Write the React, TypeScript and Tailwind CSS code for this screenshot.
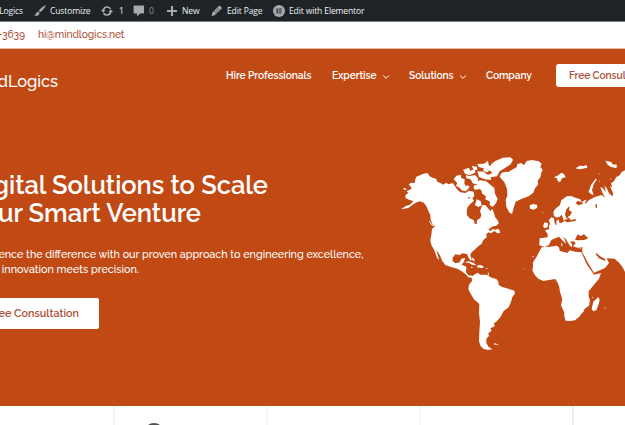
import React from "react";

const ui = "font-['Open_Sans','Noto_Sans',sans-serif]";
const brand = "font-['Raleway','Lato',sans-serif]";

function Brush() {
  return (
    <svg className="h-3 w-3 shrink-0" viewBox="0 0 12 12" fill="#a7aaad">
      <path d="M11.800.3C10 .7 6.300 3.600 4.700 5.800l1.400 1.500C8.500 5.600 11.400 2.500 11.800.3zM4.100 6.500C2.300 6.600 2.500 9 .3 10.200c1.900 1.300 5 .5 5.200-2.300z" />
    </svg>
  );
}

function Update() {
  return (
    <svg className="h-3 w-3 shrink-0" viewBox="0 0 12 12" fill="none" stroke="#a7aaad" strokeWidth="1.7">
      <path d="M2.200 5.200C2.700 3.200 4.200 2 6 2c1.500 0 2.700.7 3.400 1.800M9.800 6.800C9.300 8.800 7.800 10 6 10c-1.500 0-2.700-.7-3.400-1.800" />
      <path d="M0 5h4.400L2.200 7.800zM12 7H7.600l2.200-2.800z" fill="#a7aaad" stroke="none" />
    </svg>
  );
}

function Comment() {
  return (
    <svg className="h-3 w-3 shrink-0" viewBox="0 0 12 12" fill="#a7aaad">
      <path d="M1.400.6h8.700Q11 .6 11 1.500v6.100Q11 8.500 10.100 8.500H7L4 11.600V8.500H1.400Q.6 8.500.6 7.600V1.500Q.6.6 1.400.6z" />
    </svg>
  );
}

function Plus() {
  return (
    <svg className="h-3 w-3 shrink-0" viewBox="0 0 12 12" fill="#a7aaad">
      <path d="M5 1h2v4h4v2H7v4H5V7H1V5h4z" />
    </svg>
  );
}

function Pencil() {
  return (
    <svg className="h-3 w-3 shrink-0" viewBox="0 0 12 12" fill="#a7aaad">
      <path d="M7.500 1.300Q8.500.4 9.500 1.300l.8.8q.8.900 0 1.800L4 10.100.5 11.200l1-3.700z" />
      <path d="M3 7.500l4.700-4.700M4.100 8.700L8.800 4" stroke="#1d2327" strokeWidth=".5" />
    </svg>
  );
}

function Elementor() {
  return (
    <svg className="h-3 w-3 shrink-0" viewBox="0 0 12 12">
      <circle cx="6" cy="6" r="6" fill="#a7aaad" />
      <path d="M3.500 3.500h1.200v5H3.500zM5.600 3.500h3v1h-3zM5.600 5.500h3v1h-3zM5.600 7.500h3v1h-3z" fill="#1d2327" />
    </svg>
  );
}

function Chevron() {
  return (
    <svg className="mt-0.5 h-1.5 w-2 shrink-0" viewBox="0 0 8 6" fill="none" stroke="#fff" strokeWidth="1">
      <path d="M1.200 1.500L4 4.300l2.800-2.800" />
    </svg>
  );
}

function WorldMap() {
  return (
    <svg className="block h-[205px] w-[225px]" viewBox="15 0 675 615" fill="#fff">
      {/* North and Central America */}
      <path d="M18 178L34 167 45 164 55 153 44 150 32 145 31 136 40 129 35 124 50 116 46 108 41 104 47 98 60 99 60 91 64 80 82 73 91 70 98 70 104 79 112 83 123 86 127 95 136 99 145 104 153 98 161 103 173 99 180 109 188 120 196 127 211 129 222 122 236 125 238 138 232 145 237 152 225 163 218 171 215 182 216 196 224 205 236 210 240 223 245 222 246 211 256 204 259 194 255 184 261 166 271 165 278 173 286 183 292 177 297 189 300 201 307 210 312 219 304 227 291 230 280 239 286 243 294 237 300 239 311 236 316 248 307 250 298 243 288 250 280 247 274 253 275 262 265 270 260 281 250 289 241 297 230 307 226 315 230 328 228 333 221 324 216 312 202 310 194 315 181 313 173 323 173 333 181 340 194 337 199 326 211 324 205 338 200 344 214 350 213 367 220 376 232 377 240 382 233 384 220 382 212 373 200 364 187 356 170 352 151 345 142 333 134 314 124 300 131 325 133 331 126 323 118 301 109 285 106 270 109 254 111 237 120 229 112 221 107 209 106 195 99 181 94 168 86 158 76 154 65 157 52 165 40 174z" />
      <path d="M176 88l8-11 13-3 2 10 10 4-1 13 10 14-5 9-13-3-8-9-9-4 4-9zM204 59l18-6 4 9 14-4 1 10-16 7-14-3zM213 76l12 2 15-3 9 10-1 12-16 1-5-10-13-3zM230 48l16 2 1 9-10 2zM247 64l19 1 10 8 11 4 1 13-18-2-18-7zM253 91l20 2 11 10 14 11 2 17 8 16-5 13-10 11-9-6 1-10-14-7 1-9-11-9-2-10-10-4-4-13-12-3 1-7 14 1zM247 42l20-1 12-9 2 13 9 8-12 14-13-3 1-9-15-4zM281 58l8-16 12-9 23-10 22-1 8 7-7 14-16 10-17 11-8 15-20 3-6-8 12-5zM240 104l9 4 1 10-10 2-5-8zM245 148l12 5 3 13-10 5-11-6zM217 106l7 4-6 9-8-7zM25 113l7 2 3 5-8-1zM102 211l8 10 9 8-7-2-8-9z" />
      {/* Antilles */}
      <path d="M208 337l13-3 15 5 9 7-14-2-8-5zM248 346l9-1 11 6-8 3-14-2zM227 350l8 2-6 2zM274 353l5 4-5 1zM279 363l3 13-4 1zM230 322l8 6 1 7-7-5zM240 331l7 9" />
      {/* South America */}
      <path transform="translate(90 300)" d="M140 80L150 73 158 68 166 74 184 74 200 83 214 87 220 95 221 105 232 111 250 116 268 122 270 130 262 142 257 158 251 172 236 183 227 200 214 215 207 219 209 229 196 235 200 242 190 250 192 258 184 266 184 279 191 291 202 297 190 300 176 297 167 289 162 274 163 245 165 215 162 190 163 162 147 148 136 130 130 117 132 104 141 93z" />
      <path d="M296 581l5-1 3 2-4 3zM304 582l4-1 2 3-5 1z" />
      {/* Greenland and Iceland */}
      <path d="M314 80l5-11 11-4 10 1 11-7 14-7 2-10 12-3 8 7 8-13 16-3 20 4 9 7-4 11 7 7-4 9-3 14-8 10 2 11-10 12-5 13-14 11-22 8-17 8-5 15-6 22-9-5-8-17-2-20 5-13-1-20-8-20zM404 166l11-4 11 2 1 9-11 6-11-3z" />
      {/* Eurasia */}
      <path transform="translate(330 0)" d="M362 60L350 66 344 76 333 82 327 94 318 100 322 112 315 108 325 132 322 139 312 130 306 116 298 106 303 126 292 113 286 112 293 130 300 143 290 135 280 138 270 141 260 146 252 150 242 161 235 154 233 162 221 166 212 160 218 152 230 157 226 148 207 142 199 138 185 139 169 151 165 165 150 178 145 186 147 198 155 203 164 200 170 194 174 204 177 215 164 220 160 207 154 216 155 224 137 236 120 241 128 252 128 262 104 265 103 286 120 291 132 285 139 270 151 265 162 260 174 273 184 282 177 264 171 258 182 266 193 285 200 292 202 283 195 275 207 274 212 280 204 289 216 293 232 292 235 300 231 310 275 400 362 400z" />
      <path d="M461 233l4-13-4-9 8-9 8 3 2 14 8 12-8 7-13 1zM449 217l10 3-1 11-10 4-4-7zM479 81l11-5 9-8 8 4 5 10-11 3-6 12-7-4-3-10-6 1zM543 54l11-7 12 1 9-3 2 8-8 2-11 3-13-2zM581 125l7-20 14-19 4 2-10 15-5 18 5 15-8-4zM631 32l18 4 3 7 14 1-3 10-15-3-10-7zM660 48l8 3-7 3zM503 261l6 9-4 4zM500 277l3 9-5 2zM484 211l9 4-5 8zM560 157l9-7 6 2-7 8z" />
      {/* Arabian sea and the African coast */}
      <g transform="translate(390 270)">
        <path d="M125 38H310V180H125z" fill="#c14914" />
        <path d="M172 24H310V109L300 96 293 82 283 69 269 56 245 55 252 69 240 84 207 98 192 74 178 48 172 38z" />
        <path d="M50 22L75 20 95 17 102 22 104 32 116 36 128 38 134 31 150 35 169 37 174 48 186 74 202 97 207 104 228 99 222 116 202 140 191 154 191 170 195 180 192 197 179 206 175 216 169 221 163 230 150 241 136 243 122 242 117 226 118 218 108 196 112 178 105 156 103 142 98 128 91 117 72 120 55 123 40 116 30 106 22 91 24 80 24 67 35 50z" />
        <path d="M220 171L224 180 221 192 214 211 205 214 200 207 205 185zM201 172l4-2-1 5z" />
      </g>
      {/* inland seas */}
      <g fill="#c14914">
        <path d="M510 194l4-16 10-10-2 13 9 5-5 10-7 4-2 8-11 2 9 7 26-4 2-6-17 3-3-7-9 2zM540 269l8-16 9 5 10-5 13 12-12 5-19 1z" />
        <path d="M604 308l11 11 17 9-2 4-16-6-11-12zM601 163l5 0 0 10-4 1zM237 146l7 9-4 4zM266 136l7 5-4 4zM219 141l8 2-6 4z" />
      </g>
      <path d="M551 292l8 2-4 2z" />
      <g opacity=".65">
        <path d="M414 306l3 4M412 317l4 1 1 4-5 0zM387 355l3 3-3 1zM442 185l4 2-3 3zM627 474l5-2-1 6zM612 68l2 6-3 1zM613 91l3 4-4 1zM646 83l3 5-3 1z" />
      </g>
    </svg>
  );
}

export default function App() {
  return (
    <div className={`h-[425px] w-[625px] overflow-hidden bg-white ${brand}`}>
      <div className={`flex h-[22px] items-center border-b border-[#777a7d] bg-[#1d2327] pt-px text-[8.5px] tracking-[-0.12px] whitespace-nowrap text-[#f0f0f1] ${ui}`}>
        <div className="flex w-[23px] shrink-0 justify-end">MindLogics</div>
        <div className="ml-[11px] flex w-[67px] shrink-0 items-center gap-1"><Brush /><span>Customize</span></div>
        <div className="flex w-8 shrink-0 items-center gap-1.5"><Update /><span>1</span></div>
        <div className="flex w-[33px] shrink-0 items-center gap-1"><Comment /><span className="text-[#8c8f94]">0</span></div>
        <div className="flex w-[45px] shrink-0 items-center gap-1"><Plus /><span>New</span></div>
        <div className="flex w-[62px] shrink-0 items-center gap-1"><Pencil /><span>Edit Page</span></div>
        <div className="flex shrink-0 items-center gap-1"><Elementor /><span>Edit with Elementor</span></div>
      </div>
      <div className="flex h-[27px] items-center border-b border-[#e9b9a4] text-[10.25px] font-medium tracking-[-0.07px] whitespace-nowrap text-[#ad5137]">
        <span className="flex w-[25px] shrink-0 justify-end">555-3639</span>
        <span className="ml-[13px]">hi@mindlogics.net</span>
      </div>
      <div className="h-[357px] bg-[#c14914] text-white">
        <header className="flex h-[63px] items-start justify-between">
          <div className="flex w-[58px] shrink-0 justify-end pt-[22px] text-[16.5px] leading-5 font-medium tracking-[-0.1px]">MindLogics</div>
          <nav className="flex w-[399px] shrink-0 items-center pt-[15px] text-[10.2px] leading-[23px] font-semibold tracking-[-0.06px] whitespace-nowrap">
            <span className="w-[106px] shrink-0">Hire Professionals</span>
            <span className="flex w-[77px] shrink-0 items-center"><span className="w-[50px]">Expertise</span><Chevron /></span>
            <span className="flex w-[77px] shrink-0 items-center"><span className="w-[50px]">Solutions</span><Chevron /></span>
            <span className="w-[70px] shrink-0">Company</span>
            <span className="h-[23px] w-[100px] shrink-0 rounded-[3px] bg-white pl-[13px] font-semibold text-[#ad5137]">Free Consultation</span>
          </nav>
        </header>
        <div className="flex">
          <section className="w-[400px] shrink-0 pt-[59px]">
            <h1 className="text-[25.5px] leading-7 font-semibold tracking-[-0.05px] whitespace-nowrap">
              <span className="flex w-[268px] justify-end">Digital Solutions to Scale</span>
              <span className="flex w-[201px] justify-end">Your Smart Venture</span>
            </h1>
            <p className="mt-5 text-[10.78px] leading-[15px] font-medium whitespace-nowrap">
              <span className="flex w-[363.5px] justify-end">Experience the difference with our proven approach to engineering excellence,</span>
              <span className="flex w-[139px] justify-end">where innovation meets precision.</span>
            </p>
            <div className="mt-[21px] flex h-[31px] w-[99px] items-center justify-end rounded-r-[2px] bg-white pt-px pr-5 text-[10.8px] font-semibold whitespace-nowrap text-[#ad5137]">Free Consultation</div>
          </section>
          <div className="pt-[38px]"><WorldMap /></div>
        </div>
      </div>
      <div className="flex h-[19px] bg-white">
        <div className="w-[115px] shrink-0 border-r-2 border-[#f3f3f3]" />
        <div className="w-[153px] shrink-0 overflow-hidden border-r-2 border-[#f6f6f6] pt-[17px] pl-[29px]">
          <div className="h-5 w-5 rounded-full bg-[#505050]" />
        </div>
        <div className="w-[153px] shrink-0 border-r-2 border-[#f6f6f6]" />
        <div className="w-[153px] shrink-0 border-r-2 border-[#f0f0f0]" />
      </div>
    </div>
  );
}
